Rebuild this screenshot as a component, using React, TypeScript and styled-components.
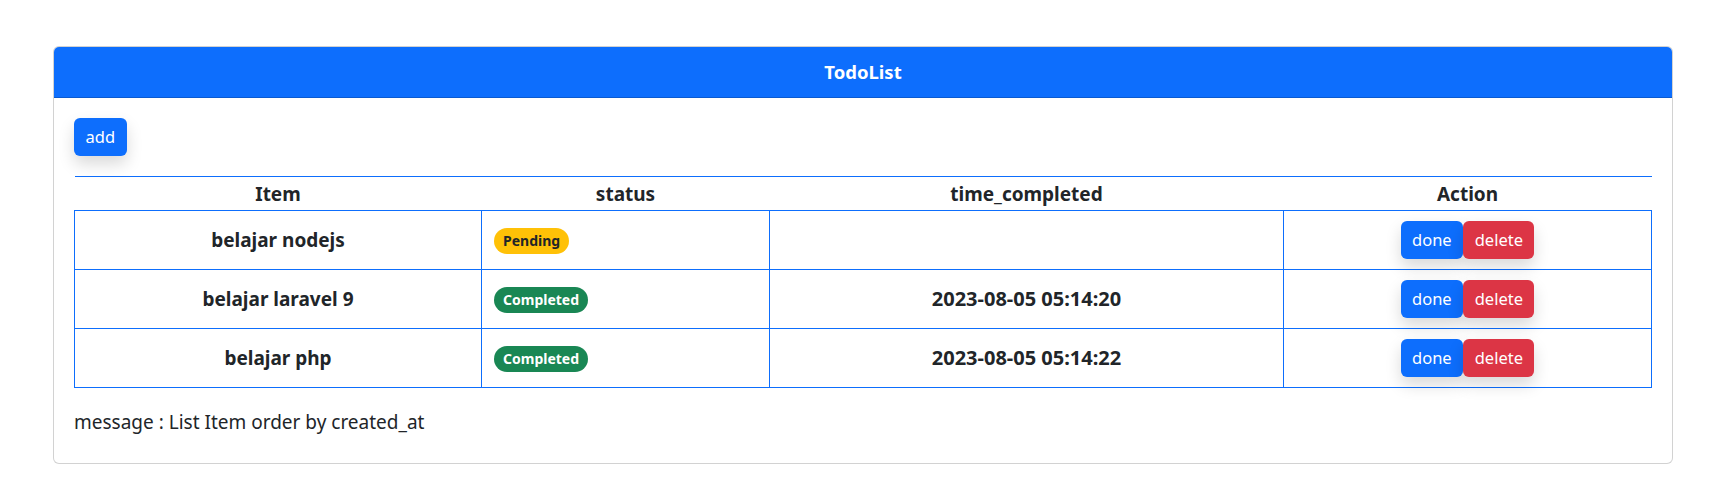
import styled, { createGlobalStyle } from "styled-components";

const GlobalStyle = createGlobalStyle`
  body {
    margin: 0;
    background: #fff;
    color: #212529;
    font-family: "Segoe UI", "Noto Sans", "Open Sans", sans-serif;
  }
`;

const Page = styled.div`
  padding: 46px 53px 28px;
`;

const Card = styled.div`
  border: 1px solid rgba(0, 0, 0, 0.175);
  border-radius: 6px;
  overflow: hidden;
  background: #fff;
`;

const CardHeader = styled.div`
  background: #0d6efd;
  color: #fff;
  text-align: center;
  font-size: 18.5px;
  font-weight: 700;
  line-height: 24px;
  padding: 13px 16px;
  border-bottom: 1px solid rgba(0, 0, 0, 0.175);
`;

const CardBody = styled.div`
  padding: 20px;
`;

interface BtnProps {
  variant: "primary" | "danger";
}

const Button = styled.button<BtnProps>`
  font-family: inherit;
  font-size: 16.5px;
  line-height: 24px;
  padding: 7px 11.5px;
  border: none;
  border-radius: 6px;
  color: #fff;
  cursor: pointer;
  background: ${(p) => (p.variant === "danger" ? "#dc3545" : "#0d6efd")};
  box-shadow: 0 8px 16px rgba(0, 0, 0, 0.15);
`;

const Toolbar = styled.div`
  display: flex;
  margin-bottom: 20px;
`;

const Table = styled.table`
  width: 100%;
  border-collapse: collapse;
  table-layout: fixed;

  th {
    border-top: 1px solid #0d6efd;
    padding: 5px 8px 4px;
    font-size: 19px;
    line-height: 24px;
    font-weight: 700;
    text-align: center;
  }

  td {
    border: 1px solid #0d6efd;
    padding: 10px 12px;
    font-size: 19px;
    line-height: 24px;
    vertical-align: middle;
  }
`;

interface CellProps {
  align?: "left" | "center";
  bold?: boolean;
  size?: number;
}

const Cell = styled.td<CellProps>`
  text-align: ${(p) => p.align || "center"};
  font-weight: ${(p) => (p.bold ? 700 : 400)};
  && {
    font-size: ${(p) => p.size || 19}px;
  }
`;

interface BadgeProps {
  done: boolean;
}

const Badge = styled.span<BadgeProps>`
  display: inline-block;
  padding: 6px 9px;
  font-size: 14px;
  font-weight: 700;
  line-height: 1;
  border-radius: 50rem;
  background: ${(p) => (p.done ? "#198754" : "#ffc107")};
  color: ${(p) => (p.done ? "#fff" : "#212529")};
`;

const Actions = styled.div`
  display: flex;
  justify-content: center;
`;

const Message = styled.p`
  margin: 22px 0 9px;
  font-size: 19px;
  line-height: 24px;
`;

const todos = [
  { id: 1, item: "belajar nodejs", status: "Pending", time: "" },
  { id: 2, item: "belajar laravel 9", status: "Completed", time: "2023-08-05 05:14:20" },
  { id: 3, item: "belajar php", status: "Completed", time: "2023-08-05 05:14:22" },
];

const App = () => {
  return (
    <>
      <GlobalStyle />
      <Page>
        <Card>
          <CardHeader>TodoList</CardHeader>
          <CardBody>
            <Toolbar>
              <Button variant="primary">add</Button>
            </Toolbar>

            <Table>
              <colgroup>
                <col style={{ width: 407 }} />
                <col style={{ width: 288 }} />
                <col style={{ width: 514 }} />
                <col />
              </colgroup>
              <thead>
                <tr>
                  <th>Item</th>
                  <th>status</th>
                  <th>time_completed</th>
                  <th>Action</th>
                </tr>
              </thead>
              <tbody>
                {todos.map((todo) => (
                  <tr key={todo.id}>
                    <Cell bold>{todo.item}</Cell>
                    <Cell align="left">
                      <Badge done={todo.status === "Completed"}>{todo.status}</Badge>
                    </Cell>
                    <Cell bold size={20}>{todo.time}</Cell>
                    <Cell>
                      <Actions>
                        <Button variant="primary">done</Button>
                        <Button variant="danger">delete</Button>
                      </Actions>
                    </Cell>
                  </tr>
                ))}
              </tbody>
            </Table>

            <Message>message : List Item order by created_at</Message>
          </CardBody>
        </Card>
      </Page>
    </>
  );
};

export default App;
